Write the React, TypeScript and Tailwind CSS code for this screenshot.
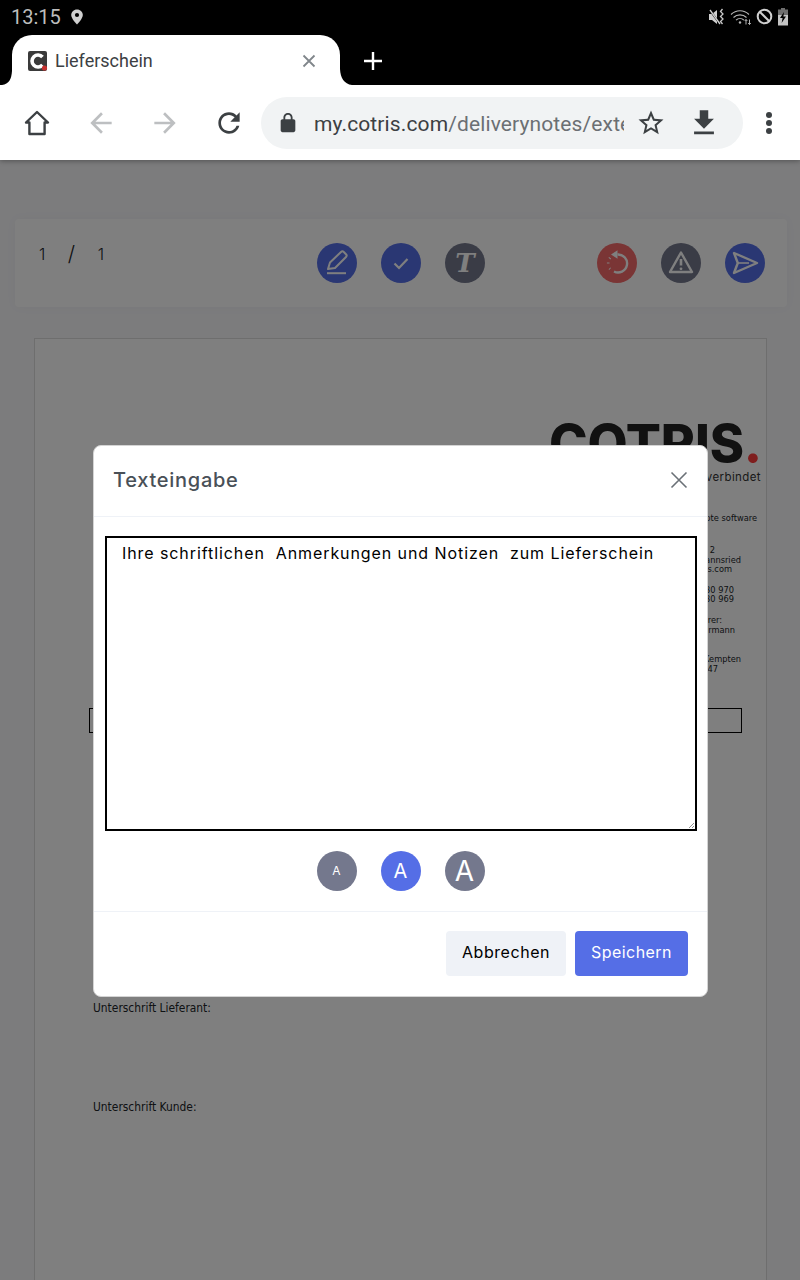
import React from "react";

const uiFont = "font-['Inter','Open_Sans',sans-serif]";

function Circle({ color, children }: { color: string; children: React.ReactNode }) {
  return (
    <div className={`w-10 h-10 rounded-full flex items-center justify-center text-white ${color}`}>
      {children}
    </div>
  );
}

const Ico = ({ children, size = 40, vb = 40 }: { children: React.ReactNode; size?: number; vb?: number }) => (
  <svg width={size} height={size} viewBox={`0 0 ${vb} ${vb}`} fill="none" stroke="currentColor" strokeWidth="2">
    {children}
  </svg>
);

function Favicon() {
  return (
    <svg width="20" height="20" viewBox="0 0 20 20">
      <rect x="0" y="0" width="19" height="20" rx="2" fill="#3a3a3a" />
      <path d="M14.5 6 A6 6 0 1 0 14.5 14" fill="none" stroke="#fff" strokeWidth="3.6" />
      <circle cx="16.5" cy="17" r="2.6" fill="#c5312f" />
    </svg>
  );
}

function StatusIcons() {
  return (
    <div className="flex items-center mr-[11px]">
      <svg width="18" height="18" viewBox="0 0 18 18" className="mr-[4px]">
        <path d="M1 6h3l5-4v14l-5-4H1z" fill="#d0d0d0" />
        <path d="M1 1l11 15" stroke="#000" strokeWidth="2" />
        <path d="M2 2l10 14" stroke="#d0d0d0" strokeWidth="1.3" />
        <path d="M14.5 1l-2 2.5 2.5 2.5-2.5 2.5 2.5 2.5-2.5 2.5 2 2.5" fill="none" stroke="#c8c8c8" strokeWidth="1.3" />
      </svg>
      <svg width="23" height="18" viewBox="0 0 23 18" fill="none" stroke="#b5b5b5" strokeWidth="1.1" className="mr-[2px]">
        <path d="M1 6.5C6 1.5 14 1.5 19 6.5" />
        <path d="M3.5 9.5C7 6 13 6 16.5 9.5" />
        <path d="M6 12.2C8.3 10 11.7 10 14 12.2" />
        <circle cx="10" cy="14.5" r="1.2" fill="#b5b5b5" stroke="none" />
        <path d="M16 11.5v5M14.7 13l1.3-1.5 1.3 1.5M19.5 16.5v-5M18.2 15l1.3 1.5 1.3-1.5" strokeWidth="1" />
      </svg>
      <svg width="17" height="17" viewBox="0 0 17 17" fill="none" stroke="#cfcfcf" strokeWidth="2" className="mr-[4px] ml-[1px]">
        <circle cx="8.5" cy="8.5" r="6.8" />
        <path d="M3.7 3.7l9.6 9.6" />
      </svg>
      <svg width="12" height="18" viewBox="0 0 12 18">
        <path d="M4 0h4v1.5h3V7H1V1.5h3z" fill="#6e6e6e" />
        <path d="M1 7h10v10.5H1z" fill="#c4c4c4" />
        <path d="M7 4L3 10h2.6L4.6 15 9 8.5H6.4z" fill="#000" />
      </svg>
    </div>
  );
}

function TopChrome() {
  return (
    <header className="relative z-10 font-['Roboto',sans-serif] shadow-[0_1px_5px_rgba(0,0,0,0.35)]">
      <div className="bg-black h-[85px] flex flex-col">
        <div className="h-[35px] flex items-center justify-between pb-[2px]">
          <div className="flex items-center pl-[11px] text-[#bdbdbd] text-[20px] leading-none">
            <span>13:15</span>
            <svg width="14" height="16" viewBox="0 0 14 16" className="ml-[9px]">
              <path d="M7 0.5C3.6 0.5 1.2 3 1.2 6.1 1.2 10 7 15.5 7 15.5s5.8-5.5 5.8-9.4C12.8 3 10.4 0.5 7 0.5z" fill="#d0d0d0" />
              <circle cx="7" cy="6" r="2.1" fill="#000" />
            </svg>
          </div>
          <StatusIcons />
        </div>
        <div className="h-[50px] flex items-start">
          <div className="relative ml-[12px] w-[328px] h-[50px] bg-white rounded-t-[20px] flex items-center pl-[16px] pt-[2px] pr-[24px]">
            <svg width="10" height="14" viewBox="0 0 10 14" className="absolute -left-[10px] bottom-0">
              <path d="M10 0 C9.5 8 7 13 0 14 H10z" fill="#fff" />
            </svg>
            <svg width="12" height="16" viewBox="0 0 12 16" className="absolute -right-[12px] bottom-0">
              <path d="M0 0 C0.5 9 4 15 12 16 H0z" fill="#fff" />
            </svg>
            <Favicon />
            <span className="ml-[7px] text-[18px] leading-none text-[#3c4043]">Lieferschein</span>
            <svg width="14" height="14" viewBox="0 0 14 14" stroke="#80868b" strokeWidth="1.8" className="ml-auto">
              <path d="M1.5 1.5l11 11M12.5 1.5l-11 11" />
            </svg>
          </div>
          <svg width="20" height="20" viewBox="0 0 20 20" stroke="#fff" strokeWidth="2.4" className="ml-[23px] mt-[16px]">
            <path d="M10 1v18M1 10h18" />
          </svg>
        </div>
      </div>
      <div className="bg-white h-[75px] flex items-center pl-[5px]">
        <div className="w-16 flex justify-center">
          <svg width="28" height="28" viewBox="0 0 28 28" fill="none" stroke="#3c4043" strokeWidth="2.4" strokeLinejoin="round">
            <path d="M3 13.5L14 3l11 10.5h-3.4V25H6.4V13.5z" />
          </svg>
        </div>
        <div className="w-16 flex justify-center">
          <svg width="32" height="32" viewBox="0 0 24 24" fill="#bdbfc1">
            <path d="M20 11H7.83l5.59-5.59L12 4l-8 8 8 8 1.41-1.41L7.83 13H20v-2z" />
          </svg>
        </div>
        <div className="w-16 flex justify-center">
          <svg width="32" height="32" viewBox="0 0 24 24" fill="#bdbfc1">
            <path d="M4 11h12.17l-5.59-5.59L12 4l8 8-8 8-1.41-1.41L16.17 13H4v-2z" />
          </svg>
        </div>
        <div className="w-16 flex justify-center">
          <svg width="32" height="32" viewBox="0 0 24 24" fill="#3c4043">
            <path d="M17.65 6.35C16.2 4.9 14.21 4 12 4c-4.42 0-7.99 3.58-7.99 8s3.57 8 7.99 8c3.73 0 6.84-2.55 7.73-6h-2.08c-.82 2.33-3.04 4-5.65 4-3.31 0-6-2.69-6-6s2.69-6 6-6c1.66 0 3.14.69 4.22 1.78L13 11h7V4l-2.35 2.35z" />
          </svg>
        </div>
        <div className="w-[482px] h-[52px] rounded-full bg-[#f1f3f4] flex items-center pl-[16px]">
          <svg width="22" height="22" viewBox="0 0 24 24" fill="#3c4043">
            <path d="M18 8h-1V6c0-2.76-2.24-5-5-5S7 3.24 7 6v2H6c-1.1 0-2 .9-2 2v10c0 1.1.9 2 2 2h12c1.1 0 2-.9 2-2V10c0-1.1-.9-2-2-2zM9 6c0-1.66 1.34-3 3-3s3 1.34 3 3v2H9V6z" />
          </svg>
          <div className="ml-[15px] w-[310px] overflow-hidden whitespace-nowrap text-[21px] leading-[24px] pt-[2px] tracking-[0.12px]">
            <span className="text-[#3c4043]">my.cotris.com</span>
            <span className="text-[#6b6f73]">/deliverynotes/exter</span>
          </div>
          <svg width="30" height="30" viewBox="0 0 24 24" fill="#3c4043" className="ml-[12px]">
            <path d="M22 9.24l-7.19-.62L12 2 9.19 8.63 2 9.24l5.46 4.73L5.82 21 12 17.27 18.18 21l-1.63-7.03L22 9.24zM12 15.4l-3.76 2.27 1-4.28-3.32-2.88 4.38-.38L12 6.1l1.71 4.04 4.38.38-3.32 2.88 1 4.28L12 15.4z" />
          </svg>
          <svg width="34" height="34" viewBox="0 0 24 24" fill="#3c4043" className="ml-[21px]">
            <path d="M19 9h-4V3H9v6H5l7 7 7-7zM5 18v2h14v-2H5z" />
          </svg>
        </div>
        <div className="ml-[23px] flex flex-col gap-[2px]">
          <span className="w-[6px] h-[6px] rounded-full bg-[#3c4043]" />
          <span className="w-[6px] h-[6px] rounded-full bg-[#3c4043]" />
          <span className="w-[6px] h-[6px] rounded-full bg-[#3c4043]" />
        </div>
      </div>
    </header>
  );
}

function ActionBar() {
  return (
    <div className={`ml-[15px] w-[772px] h-[88px] bg-white rounded-[4px] flex items-start shadow-[0_0_12px_rgba(18,38,63,0.03)] ${uiFont}`}>
      <div className="w-[91px] flex justify-between items-center pl-[24px] pr-[2px] pt-[24px] text-[16px] leading-[22px] font-light text-[#212529]">
        <span>1</span>
        <span className="text-[21px]">/</span>
        <span>1</span>
      </div>
      <div className="ml-[211px] mt-[24px] flex gap-6">
        <Circle color="bg-[#556ee6]">
          <Ico>
            <path d="M11 26l2-6.5L24 9a2 2 0 0 1 2.8 0l2.2 2.2a2 2 0 0 1 0 2.8L18 25z" strokeLinejoin="round" />
            <path d="M10 30.2h19" />
          </Ico>
        </Circle>
        <Circle color="bg-[#556ee6]">
          <Ico>
            <path d="M13.5 20.5l4.5 4.5 8.5-9" strokeWidth="2.2" />
          </Ico>
        </Circle>
        <Circle color="bg-[#74788d]">
          <span className="font-['DejaVu_Serif',serif] font-bold italic text-[26px] leading-none">T</span>
        </Circle>
      </div>
      <div className="ml-[112px] mt-[24px] flex gap-6">
        <Circle color="bg-[#f46a6a]">
          <Ico>
            <path d="M20.5 11.5a9 9 0 1 1-3.5 17" strokeWidth="2.4" />
            <path d="M14 11.5l6.5-4.2v8.4z" fill="currentColor" stroke="none" />
            <path d="M11.2 20.5v-1M12.5 15.6l.6-.8M12.5 25.4l.6.6" strokeWidth="2.6" />
          </Ico>
        </Circle>
        <Circle color="bg-[#74788d]">
          <Ico>
            <path d="M20 9.5L31 29H9z" strokeWidth="2.4" strokeLinejoin="round" />
            <path d="M20 16v6.5" strokeWidth="2.6" />
            <circle cx="20" cy="25.8" r="1.4" fill="currentColor" stroke="none" />
          </Ico>
        </Circle>
        <Circle color="bg-[#556ee6]">
          <Ico>
            <path d="M9 10l23 10-23 10 3.8-10z" strokeWidth="2.4" strokeLinejoin="round" />
            <path d="M13 20h11" strokeWidth="1.6" />
          </Ico>
        </Circle>
      </div>
    </div>
  );
}

const addressLines: { text: string; cls: string }[] = [
  { text: "Am Park 2", cls: "mr-[51px] mt-[22px]" },
  { text: "87616 Johannsried", cls: "mr-[25px]" },
  { text: "info@cotris.com", cls: "mr-[34px]" },
  { text: "Tel. 08379 30 970", cls: "mr-[32px] mt-[11px]" },
  { text: "Fax 08379 30 969", cls: "mr-[32px]" },
  { text: "Geschäftsführer:", cls: "mr-[44px] mt-[11.5px]" },
  { text: "Thomas Obermann", cls: "mr-[31px]" },
  { text: "Amtsgericht Kempten", cls: "mr-[25px] mt-[20px]" },
  { text: "HRB 11747", cls: "mr-[48px]" },
];

function DeliveryNote() {
  return (
    <div className="ml-[34px] mt-[31px] w-[733px] h-[960px] bg-white border border-[#dcdcdc] font-['DejaVu_Sans',sans-serif] font-stretch-condensed text-[#212529] flex flex-col">
      <div className="mt-[82px] mr-[4px] self-end flex items-baseline font-['Inter',sans-serif] font-extrabold text-[52px] leading-[46px] tracking-[-0.2px] text-[#222]">
        COTRIS<span className="text-[#ff3c3c]">.</span>
      </div>
      <div className="mt-[3px] mr-[5px] self-end text-[11.5px] leading-[14px] font-['Inter',sans-serif] font-stretch-normal text-[#333] tracking-[0.4px]">
        verbindet
      </div>
      <div className="mr-[9px] mt-[29px] self-end text-[9.2px] leading-[10px] whitespace-nowrap">Konzepte software</div>
      {addressLines.map((l) => (
        <div key={l.text} className={`self-end text-[9.2px] leading-[9.5px] whitespace-nowrap ${l.cls}`}>
          {l.text}
        </div>
      ))}
      <div className="mt-[35px] ml-[54px] w-[653px] h-[25px] border border-black" />
      <div className="mt-[268px] ml-[58px] text-[11.9px] leading-[14px]">Unterschrift Lieferant:</div>
      <div className="mt-[85px] ml-[58px] text-[11.9px] leading-[14px]">Unterschrift Kunde:</div>
    </div>
  );
}

function Modal() {
  return (
    <div className={`absolute left-[93px] top-[285px] w-[615px] h-[552px] bg-white rounded-[8px] border border-[#d4d4d4] flex flex-col ${uiFont}`}>
      <div className="h-[71px] shrink-0 border-b border-[#eff2f7] flex items-center justify-between pl-[19px] pr-[19px] pb-[2px]">
        <h5 className="text-[20px] font-medium text-[#495057] leading-none tracking-[0.72px]">Texteingabe</h5>
        <svg width="18" height="18" viewBox="0 0 18 18" stroke="#6b7177" strokeWidth="1.6">
          <path d="M1.5 1.5l15 15M16.5 1.5l-15 15" />
        </svg>
      </div>
      <div className="relative mx-[11px] mt-[19px] w-[592px] h-[295px]">
        <textarea
          readOnly
          defaultValue="Ihre schriftlichen  Anmerkungen und Notizen  zum Lieferschein"
          className="block w-full h-full border-2 border-black bg-white px-[15px] py-[3px] text-[16px] leading-[24px] text-black outline-none resize-none tracking-[0.92px]"
        />
        <svg width="5" height="5" viewBox="0 0 5 5" stroke="#777" strokeWidth="0.8" className="absolute right-[3px] bottom-[3px]">
          <path d="M0 5L5 0M3 5L5 3" />
        </svg>
      </div>
      <div className="mt-[20px] flex justify-center gap-6">
        <Circle color="bg-[#74788d]">
          <span className="text-[12px] leading-none">A</span>
        </Circle>
        <Circle color="bg-[#556ee6]">
          <span className="text-[20px] leading-none">A</span>
        </Circle>
        <Circle color="bg-[#74788d]">
          <span className="text-[28px] leading-none">A</span>
        </Circle>
      </div>
      <div className="mt-[20px] border-t border-[#eff2f7] flex justify-end gap-[9px] pt-[19px] pr-[19px]">
        <button className="w-[120px] h-[45px] rounded-[4px] bg-[#eff2f7] text-[16px] text-black pb-[4px] tracking-[0.55px]">Abbrechen</button>
        <button className="w-[113px] h-[45px] rounded-[4px] bg-[#556ee6] text-[16px] text-white pb-[4px] tracking-[0.45px]">Speichern</button>
      </div>
    </div>
  );
}

export default function App() {
  return (
    <div className="w-[800px] h-[1280px] overflow-hidden flex flex-col bg-[#f8f8fb]">
      <TopChrome />
      <main className="relative flex-1 overflow-hidden pt-[59px]">
        <ActionBar />
        <DeliveryNote />
        <div className="absolute inset-0 bg-black/50" />
        <Modal />
      </main>
    </div>
  );
}
